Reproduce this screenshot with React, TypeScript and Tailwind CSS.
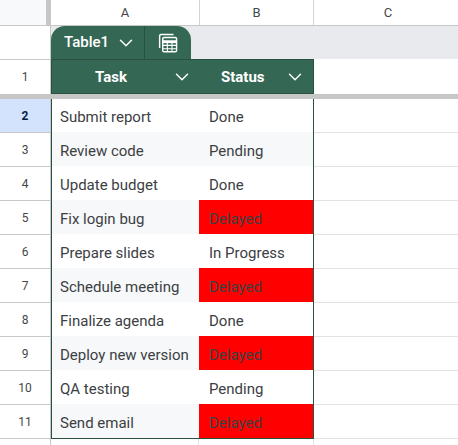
import { ChevronDown } from 'lucide-react';

const ROWS = [
  { n: 2, task: 'Submit report', status: 'Done' },
  { n: 3, task: 'Review code', status: 'Pending' },
  { n: 4, task: 'Update budget', status: 'Done' },
  { n: 5, task: 'Fix login bug', status: 'Delayed' },
  { n: 6, task: 'Prepare slides', status: 'In Progress' },
  { n: 7, task: 'Schedule meeting', status: 'Delayed' },
  { n: 8, task: 'Finalize agenda', status: 'Done' },
  { n: 9, task: 'Deploy new version', status: 'Delayed' },
  { n: 10, task: 'QA testing', status: 'Pending' },
  { n: 11, task: 'Send email', status: 'Delayed' },
];

function TableIcon() {
  return (
    <svg width="22" height="22" viewBox="0 0 20 20" fill="none" stroke="white" strokeWidth="1.3">
      <path d="M2.4 14.5V3.4C2.4 2.8 2.9 2.3 3.5 2.3H15" />
      <rect x="5.2" y="5" width="12.6" height="13" rx="1.2" />
      <path d="M5.2 8.8H17.8" strokeWidth="2.6" />
      <path d="M5.2 12.2H17.8M5.2 15.2H17.8M9.4 10V18M13.6 10V18" strokeWidth="1" />
    </svg>
  );
}

export default function App() {
  return (
    <div className="w-[458px] h-[445px] overflow-hidden bg-white text-[15px] text-[#3c4043] font-['Roboto',sans-serif]">
      {/* Column letters */}
      <div className="flex h-[26px] border-b border-[#c7c7c7] text-[13px] text-[#444746]">
        <div className="w-[46px] shrink-0 bg-[#f8f9fa]" />
        <div className="w-[5px] shrink-0 bg-[#c7c7c7]" />
        <div className="w-[149px] shrink-0 flex items-center justify-center border-r border-[#d3d3d3]">A</div>
        <div className="w-[114px] shrink-0 flex items-center justify-center border-r border-[#d3d3d3]">B</div>
        <div className="w-[148px] shrink-0 flex items-center justify-center">C</div>
      </div>

      {/* Table tab strip */}
      <div className="flex h-[33px]">
        <div className="w-[51px] border-r border-[#c7c7c7]" />
        <div className="flex-1 flex bg-[#e8eaed]">
          <div className="flex w-[140px] rounded-t-[14px] bg-[#356854] text-white">
            <div className="w-[94px] flex items-center pl-[13px] border-r border-[#2a5040] font-medium">
              Table1
              <ChevronDown className="ml-[6px]" size={22} strokeWidth={1.6} />
            </div>
            <div className="flex-1 flex items-center justify-center">
              <TableIcon />
            </div>
          </div>
        </div>
      </div>

      {/* Row 1, the table header */}
      <div className="flex h-[35px]">
        <div className="w-[51px] border-t border-r border-[#c7c7c7] flex items-center justify-center text-[12px] text-[#444746]">1</div>
        <div className="w-[263px] flex bg-[#356854] text-white font-bold border border-[#2a5040]">
          <div className="w-[147px] flex items-center pl-[43px] pr-[6px]">
            <span className="pt-[2px]">Task</span>
            <ChevronDown className="ml-auto" size={22} strokeWidth={1.6} />
          </div>
          <div className="flex-1 flex items-center pl-[22px] pr-[7px]">
            <span className="pt-[2px]">Status</span>
            <ChevronDown className="ml-auto" size={22} strokeWidth={1.6} />
          </div>
        </div>
      </div>

      {/* Frozen row divider */}
      <div className="h-[5px] bg-[#c7c7c7]" />

      {/* Data rows */}
      {ROWS.map((row, i) => (
        <div key={row.n} className={`flex ${i === 0 ? 'h-[33px]' : 'h-[34px]'}`}>
          <div
            className={`w-[51px] flex items-center justify-center text-[12px] border-r border-[#c7c7c7] ${
              i > 0 ? 'border-t' : ''
            } ${row.n === 2 ? 'bg-[#d3e3fd] text-[#041e49] font-bold' : 'text-[#444746]'}`}
          >
            {row.n}
          </div>
          <div
            className={`w-[148px] flex items-center pl-[8px] border-l border-[#2a5040] ${
              i === 0 ? 'pt-[4px]' : 'pt-[5px]'
            } ${i % 2 === 1 ? 'bg-[#f6f8f9]' : 'bg-white'}`}
          >
            {row.task}
          </div>
          <div
            className={`w-[115px] flex items-center pl-[10px] border-r border-[#2a5040] ${
              i === 0 ? 'pt-[4px]' : 'pt-[5px]'
            } ${row.status === 'Delayed' ? 'bg-[#ff0000]' : i % 2 === 1 ? 'bg-[#f6f8f9]' : 'bg-white'}`}
          >
            {row.status}
          </div>
          <div className={`flex-1 border-[#e1e3e1] ${i > 0 ? 'border-t' : ''}`} />
        </div>
      ))}

      {/* Start of row 12, under the table */}
      <div className="flex h-[7px]">
        <div className="w-[51px] border-t border-r border-[#c7c7c7]" />
        <div className="w-[263px] flex border-t border-[#2a5040]">
          <div className="w-[148px] border-r border-[#e1e3e1]" />
          <div className="flex-1 border-r border-[#e1e3e1]" />
        </div>
        <div className="flex-1 border-t border-[#e1e3e1]" />
      </div>
    </div>
  );
}
